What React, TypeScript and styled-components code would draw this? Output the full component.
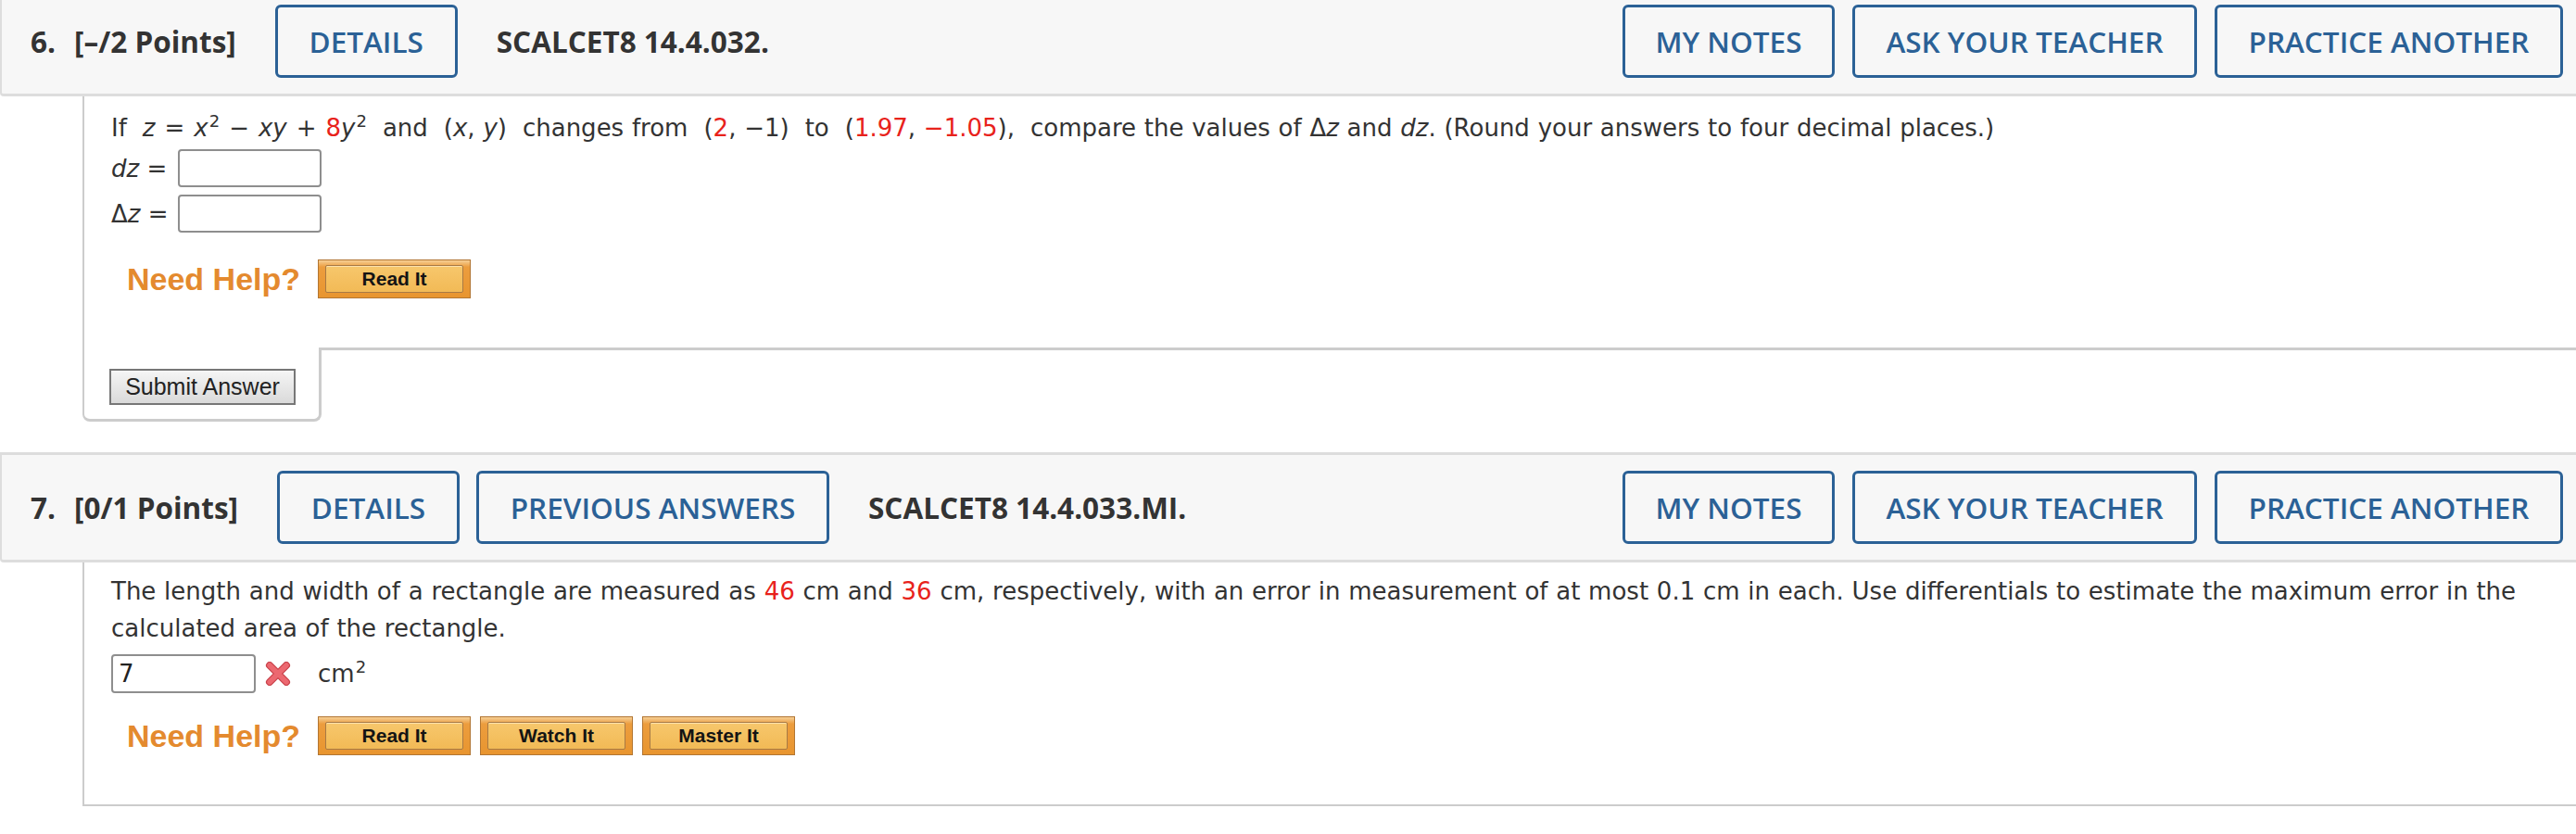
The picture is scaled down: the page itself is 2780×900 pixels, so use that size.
import React from 'react'
import styled, { createGlobalStyle } from 'styled-components'

const GlobalStyle = createGlobalStyle`
  html, body {
    margin: 0;
    padding: 0;
    background: #ffffff;
  }
  body {
    width: 2780px;
    overflow: hidden;
    font-family: "DejaVu Sans", Verdana, sans-serif;
    color: #333333;
  }
`

const Page = styled.div`
  width: 2780px;
  display: flex;
  flex-direction: column;
`

const Question = styled.section<{ $first?: boolean }>`
  display: flex;
  flex-direction: column;
  margin-top: ${p => (p.$first ? '0' : '33px')};
`

const Header = styled.div<{ $cut?: boolean }>`
  display: flex;
  align-items: center;
  gap: 42px;
  background: #f7f7f7;
  border-left: 2px solid #dddddd;
  border-bottom: 3px solid #dddddd;
  border-top: ${p => (p.$cut ? 'none' : '3px solid #dddddd')};
  border-bottom-left-radius: 4px;
  padding: ${p => (p.$cut ? '5px' : '17px')} 14px 17px 31px;
  font-family: "Open Sans", "Liberation Sans", sans-serif;
`

const Points = styled.div`
  font-size: 31.5px;
  font-weight: 700;
  color: #333333;
  white-space: nowrap;
  span {
    margin-right: 20px;
  }
`

const Code = styled.div`
  font-size: 31.5px;
  font-weight: 700;
  color: #333333;
  white-space: nowrap;
`

const ButtonGroup = styled.div<{ $right?: boolean }>`
  display: flex;
  gap: ${p => (p.$right ? '19px' : '18px')};
  margin-left: ${p => (p.$right ? 'auto' : '0')};
`

const HeadButton = styled.button<{ $w: number }>`
  width: ${p => p.$w}px;
  height: 79px;
  box-sizing: border-box;
  border: 3px solid #2b6196;
  border-radius: 6px;
  background: transparent;
  color: #2b6196;
  font-family: "Open Sans", "Liberation Sans", sans-serif;
  font-size: 31.5px;
  font-weight: 600;
  white-space: nowrap;
  padding: 0;
`

const Content = styled.div<{ $closed?: boolean }>`
  margin-left: 89px;
  border-left: 2px solid #cccccc;
  border-bottom: ${p => (p.$closed ? '2px solid #cccccc' : 'none')};
  padding: ${p => (p.$closed ? '11px 30px 53px 29px' : '14px 30px 53px 29px')};
  display: flex;
  flex-direction: column;
`

const Prompt = styled.p`
  margin: 0;
  font-size: 26px;
  line-height: 40px;
  word-spacing: 0.5px;
  color: #333333;
`

const Red = styled.span`
  color: #e8221b;
`

const Var = styled.i`
  font-style: italic;
`

// extra room the math renderer leaves around each formula
const Math = styled.span`
  padding: 0 17px;
`

const Op = styled.span`
  margin: 0 10px;
`

const Sup = styled.sup`
  font-size: 18px;
  line-height: 0;
  vertical-align: 0.55em;
  margin-left: 1px;
`

const AnswerRow = styled.div<{ $gap: number }>`
  display: flex;
  align-items: center;
  margin-top: ${p => p.$gap}px;
  font-size: 26px;
`

const Label = styled.span`
  width: 64px;
  margin-right: 8px;
  white-space: nowrap;
`

const AnswerBox = styled.div<{ $w: number; $h: number }>`
  width: ${p => p.$w}px;
  height: ${p => p.$h}px;
  box-sizing: border-box;
  border: 2px solid #8e8e8e;
  border-radius: 4px;
  background: #ffffff;
  display: flex;
  align-items: center;
  padding-left: 6px;
  font-size: 26px;
  color: #222222;
`

const WrongMark = styled.span`
  display: flex;
  margin-left: 10px;
  margin-right: 29px;
`

const Unit = styled.span`
  font-size: 26px;
`

const HelpRow = styled.div<{ $gap: number }>`
  display: flex;
  align-items: center;
  gap: 10px;
  margin-top: ${p => p.$gap}px;
  padding-left: 17px;
`

const NeedHelp = styled.span`
  font-family: "Liberation Sans", Arial, sans-serif;
  font-weight: 700;
  font-size: 34px;
  color: #e48a2e;
  margin-right: 9px;
`

const HelpButton = styled.button`
  width: 165px;
  height: 42px;
  box-sizing: border-box;
  padding: 5px 7px 5px 7px;
  border: 1px solid #b27633;
  background: linear-gradient(#f6cf95 0%, #ec9d3e 18%, #e8952f 100%);
  display: flex;
`

const HelpInner = styled.span`
  flex: 1;
  display: flex;
  align-items: center;
  justify-content: center;
  background: linear-gradient(#f7c76c, #f2ba56);
  border: 1px solid #a87a45;
  border-radius: 2px;
  box-shadow: inset 0 1px 0 #fde2ad;
  font-family: "Liberation Sans", Arial, sans-serif;
  font-weight: 700;
  font-size: 21px;
  color: #141414;
`

const SubmitRow = styled.div`
  display: flex;
  margin-left: 89px;
`

const SubmitCell = styled.div`
  border-left: 2px solid #cccccc;
  border-right: 3px solid #cccccc;
  border-bottom: 3px solid #cccccc;
  border-radius: 0 0 8px 8px;
  padding: 23px 25px 15px 27px;
`

const Filler = styled.div`
  flex: 1;
  margin-left: -3px;
  border-top: 3px solid #cccccc;
`

const SubmitButton = styled.button`
  width: 201px;
  height: 39px;
  box-sizing: border-box;
  border: 2px solid #777777;
  background: linear-gradient(#f5f5f5, #dadada);
  font-family: "Liberation Sans", Arial, sans-serif;
  font-size: 25px;
  color: #222222;
  padding: 0;
`

const XIcon = () => (
  <svg width="28" height="26" viewBox="0 0 28 26">
    <path d="M5 4 L23 22 M23 4 L5 22" stroke="#c9434b" strokeWidth="8" strokeLinecap="round" />
    <path d="M5 4 L23 22 M23 4 L5 22" stroke="#ec6870" strokeWidth="5.5" strokeLinecap="round" />
  </svg>
)

const Help = ({ items, gap }: { items: string[]; gap: number }) => (
  <HelpRow $gap={gap}>
    <NeedHelp>Need Help?</NeedHelp>
    {items.map(t => (
      <HelpButton key={t}>
        <HelpInner>{t}</HelpInner>
      </HelpButton>
    ))}
  </HelpRow>
)

const RightButtons = () => (
  <ButtonGroup $right>
    <HeadButton $w={229}>MY NOTES</HeadButton>
    <HeadButton $w={372}>ASK YOUR TEACHER</HeadButton>
    <HeadButton $w={376}>PRACTICE ANOTHER</HeadButton>
  </ButtonGroup>
)

export default function App() {
  return (
    <Page>
      <GlobalStyle />
      <Question $first>
        <Header $cut>
          <Points><span>6.</span>[–/2 Points]</Points>
          <ButtonGroup>
            <HeadButton $w={197}>DETAILS</HeadButton>
          </ButtonGroup>
          <Code>SCALCET8 14.4.032.</Code>
          <RightButtons />
        </Header>
        <Content>
          <Prompt>
            If
            <Math>
              <Var>z</Var><Op>=</Op><Var>x</Var><Sup>2</Sup><Op>−</Op><Var>xy</Var><Op>+</Op><Red>8</Red><Var>y</Var><Sup>2</Sup>
            </Math>
            and
            <Math>(<Var>x</Var>, <Var>y</Var>)</Math>
            changes from
            <Math>(<Red>2</Red>, −1)</Math>
            to
            <Math>(<Red>1.97</Red>, <Red>−1.05</Red>),</Math>
            compare the values of Δ<Var>z</Var> and <Var>dz</Var>. (Round your answers to four decimal places.)
          </Prompt>
          <AnswerRow $gap={3}>
            <Label><Var>dz</Var> =</Label>
            <AnswerBox $w={155} $h={41} />
          </AnswerRow>
          <AnswerRow $gap={8}>
            <Label>Δ<Var>z</Var> =</Label>
            <AnswerBox $w={155} $h={41} />
          </AnswerRow>
          <Help items={['Read It']} gap={29} />
        </Content>
        <SubmitRow>
          <SubmitCell>
            <SubmitButton>Submit Answer</SubmitButton>
          </SubmitCell>
          <Filler />
        </SubmitRow>
      </Question>

      <Question>
        <Header>
          <Points><span>7.</span>[0/1 Points]</Points>
          <ButtonGroup>
            <HeadButton $w={197}>DETAILS</HeadButton>
            <HeadButton $w={381}>PREVIOUS ANSWERS</HeadButton>
          </ButtonGroup>
          <Code>SCALCET8 14.4.033.MI.</Code>
          <RightButtons />
        </Header>
        <Content $closed>
          <Prompt>
            The length and width of a rectangle are measured as <Red>46</Red> cm and <Red>36</Red> cm, respectively, with an
            error in measurement of at most 0.1 cm in each. Use differentials to estimate the maximum error in the
            calculated area of the rectangle.
          </Prompt>
          <AnswerRow $gap={8}>
            <AnswerBox $w={156} $h={42}>7</AnswerBox>
            <WrongMark><XIcon /></WrongMark>
            <Unit>cm<Sup>2</Sup></Unit>
          </AnswerRow>
          <Help items={['Read It', 'Watch It', 'Master It']} gap={25} />
        </Content>
      </Question>
    </Page>
  )
}
